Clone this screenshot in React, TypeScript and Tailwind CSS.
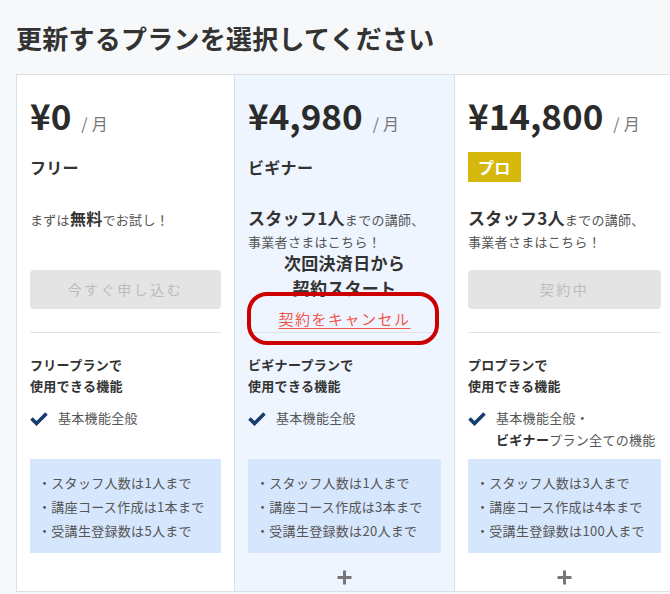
import React from "react";

const FONT = { fontFamily: '"Noto Sans CJK JP", "Noto Sans", sans-serif' };

function Check() {
  return (
    <svg width="18" height="14" viewBox="0 0 18 14" className="shrink-0 mt-[5px]">
      <path d="M1.5 6.5 L6.5 11.5 L16.5 1.5" fill="none" stroke="#153d6e" strokeWidth="3.6" strokeLinecap="butt" strokeLinejoin="miter" />
    </svg>
  );
}

function Plus() {
  return (
    <svg width="15" height="15" viewBox="0 0 15 15">
      <path d="M7.5 0.5 V14.5 M0.5 7.5 H14.5" stroke="#777" strokeWidth="3" />
    </svg>
  );
}

type CardProps = {
  price: string;
  name: React.ReactNode;
  desc: React.ReactNode;
  action: React.ReactNode;
  planLabel: string;
  features: React.ReactNode;
  limits: string[];
  plus: boolean;
  highlight?: boolean;
  first?: boolean;
  overlay?: React.ReactNode;
};

function Card(p: CardProps) {
  return (
    <div
      className={
        "relative h-[518px] shrink-0 border border-[#dcdfe4] px-[13px] pt-[22px] flex flex-col tracking-[0.3px] " +
        (p.highlight ? "bg-[#eef5ff]" : "bg-white") +
        (p.first ? " w-[219px]" : " w-[221px] -ml-px")
      }
    >
      <div className="flex items-baseline h-[36px] leading-[36px]">
        <span className="text-[35px] font-bold tracking-normal text-[#2b2b2b]">{p.price}</span>
        <span className="ml-[10px] text-[16px] text-[#777]">/ 月</span>
      </div>
      <div className="mt-[19px] h-[30px] flex items-center">{p.name}</div>
      <div className="mt-[24px] h-[44px] text-[#555]">{p.desc}</div>
      <div className="h-[82px]">{p.action}</div>
      <div className="h-px bg-[#e0e2e6]" />
      <div className="mt-[21px] text-[13px] font-bold leading-[21px] text-[#333]">
        <div>{p.planLabel}プランで</div>
        <div>使用できる機能</div>
      </div>
      <div className="mt-[11px] h-[44px] flex gap-[10px]">
        <Check />
        <div className="text-[13px] leading-[22px] text-[#555]">{p.features}</div>
      </div>
      <div className="mt-[8px] h-[94px] bg-[#d5e6fd] pl-[8px] pt-[12px] text-[13px] leading-[24px] text-[#555]">
        {p.limits.map((l) => (
          <div key={l} className="whitespace-nowrap">・{l}</div>
        ))}
      </div>
      <div className="flex-1 flex items-center justify-center pt-[11px]">{p.plus ? <Plus /> : null}</div>
      {p.overlay}
    </div>
  );
}

export default function App() {
  return (
    <div className="w-[670px] h-[594px] overflow-hidden bg-[#f7f8fa]" style={FONT}>
      <div className="pt-[20px] pl-[16px] h-[74px]">
        <h1 className="text-[26px] font-bold leading-[36px] tracking-[0.25px] text-[#333] whitespace-nowrap">
          更新するプランを選択してください
        </h1>
      </div>
      <div className="flex pl-[16px]">
        <Card
          first
          price="¥0"
          name={<span className="text-[16px] font-bold text-[#333]">フリー</span>}
          desc={
            <div className="leading-[24px] text-[13px]">
              まずは<span className="text-[16px] font-bold text-[#333]">無料</span>でお試し！
            </div>
          }
          action={
            <div className="mt-[20px] h-[39px] rounded-[4px] bg-[#e4e4e4] flex items-center justify-center text-[14px] tracking-[2.5px] text-[#bcbcbc]">
              今すぐ申し込む
            </div>
          }
          planLabel="フリー"
          features={<div>基本機能全般</div>}
          limits={["スタッフ人数は1人まで", "講座コース作成は1本まで", "受講生登録数は5人まで"]}
          plus={false}
        />
        <Card
          highlight
          price="¥4,980"
          name={<span className="text-[16px] font-bold text-[#333]">ビギナー</span>}
          desc={
            <div>
              <div className="leading-[24px] text-[13px] whitespace-nowrap">
                <span className="text-[17px] font-bold text-[#333]">スタッフ1人</span>までの講師、
              </div>
              <div className="leading-[20px] text-[13px]">事業者さまはこちら！</div>
            </div>
          }
          action={
            <div className="text-center">
              <div className="text-[17px] font-bold leading-[25px] text-[#333]">
                <div>次回決済日から</div>
                <div>契約スタート</div>
              </div>
              <div className="mt-[5px] h-[26px] leading-[26px]">
                <span className="text-[15px] tracking-[1.5px] text-[#f2574c] underline underline-offset-[3px]">
                  契約をキャンセル
                </span>
              </div>
            </div>
          }
          planLabel="ビギナー"
          features={<div>基本機能全般</div>}
          limits={["スタッフ人数は1人まで", "講座コース作成は3本まで", "受講生登録数は20人まで"]}
          plus
          overlay={
            <div className="absolute left-[12px] top-[217px] w-[192px] h-[53px] rounded-[20px] border-[4px] border-[#cc0000]" />
          }
        />
        <Card
          price="¥14,800"
          name={
            <span className="h-[30px] px-[10px] flex items-center bg-[#d6b80c] text-[16px] font-bold text-white">
              プロ
            </span>
          }
          desc={
            <div>
              <div className="leading-[24px] text-[13px] whitespace-nowrap">
                <span className="text-[17px] font-bold text-[#333]">スタッフ3人</span>までの講師、
              </div>
              <div className="leading-[20px] text-[13px]">事業者さまはこちら！</div>
            </div>
          }
          action={
            <div className="mt-[20px] h-[39px] rounded-[4px] bg-[#e4e4e4] flex items-center justify-center text-[14px] tracking-[2.5px] text-[#bcbcbc]">
              契約中
            </div>
          }
          planLabel="プロ"
          features={
            <>
              <div>基本機能全般・</div>
              <div className="whitespace-nowrap">
                <span className="font-bold text-[#333]">ビギナー</span>プラン全ての機能
              </div>
            </>
          }
          limits={["スタッフ人数は3人まで", "講座コース作成は4本まで", "受講生登録数は100人まで"]}
          plus
        />
      </div>
    </div>
  );
}
